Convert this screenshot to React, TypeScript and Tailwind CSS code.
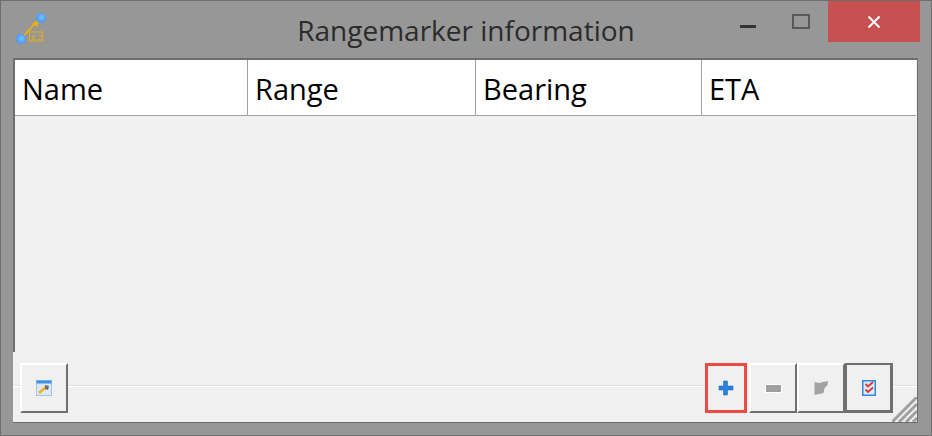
import React from "react";

const Btn = ({ children, cls }: { children: React.ReactNode; cls: string }) => (
  <div className={"relative z-10 flex items-center justify-center bg-[#f0f0f0] " + cls}>{children}</div>
);

const raised = "border-t-2 border-l-2 border-t-white border-l-white border-r-2 border-b-2 border-r-[#6f6f6f] border-b-[#6f6f6f]";

export default function App() {
  return (
    <div className="relative flex h-[436px] w-[932px] flex-col overflow-hidden border border-[#6e6e6e] bg-[#979797] font-['Open_Sans',sans-serif]">
      {/* title bar */}
      <div className="grid h-[57px] shrink-0 grid-cols-[1fr_auto_1fr] items-start">
        <svg className="ml-[13px] mt-[10px]" width="36" height="36" viewBox="0 0 36 36">
          <defs>
            <radialGradient id="b" cx="0.55" cy="0.45" r="0.6">
              <stop offset="0" stopColor="#7cc0ff" />
              <stop offset="1" stopColor="#3f93f2" />
            </radialGradient>
          </defs>
          <path d="M7 28 L23 10" stroke="#f0b400" strokeWidth="1.6" />
          <path d="M18.5 12.5 L25 9 L23.5 16 Z" fill="#f0b400" />
          <circle cx="7" cy="28" r="5" fill="url(#b)" />
          <circle cx="27" cy="7" r="5" fill="url(#b)" />
          <rect x="15.5" y="21" width="13" height="9" fill="none" stroke="#e6ae14" strokeWidth="1" />
          <text x="17" y="29" fontSize="8" fill="#e6ae14" fontFamily="Liberation Sans">6.2</text>
        </svg>
        <div className="pt-[10px] text-center text-[28px] leading-[38px] text-[#2b2b2b]">Rangemarker information</div>
        <div className="flex items-start justify-end pr-[11px]">
          <div className="mr-[36px] mt-[24px] h-[3px] w-[16px] bg-[#333333]" />
          <div className="mr-[18px] mt-[13px] h-[15px] w-[18px] border-[2px] border-[#595959]" />
          <div className="flex h-[41px] w-[92px] items-center justify-center bg-[#c75050]">
            <svg width="14" height="14" viewBox="0 0 14 14">
              <path d="M1.5 1.5 L12.5 12.5 M12.5 1.5 L1.5 12.5" stroke="#fff" strokeWidth="2" />
            </svg>
          </div>
        </div>
      </div>

      {/* client */}
      <div className="relative mx-[12px] flex h-[365px] w-[905px] flex-col border-t-[2px] border-l-[2px] border-r border-b border-[#6e6e6e] bg-[#f0f0f0]">
        <div className="flex h-[56px] w-[901px] shrink-0 border-b border-[#a0a0a0] bg-white text-[29px] leading-[58px] text-black">
          <div className="w-[233px] border-r border-[#a0a0a0] pl-[7px]">Name</div>
          <div className="w-[228px] border-r border-[#a0a0a0] pl-[7px]">Range</div>
          <div className="w-[226px] border-r border-[#a0a0a0] pl-[7px]">Bearing</div>
          <div className="flex-1 pl-[7px]">ETA</div>
        </div>
        <div className="flex-1" />

        {/* tool strip */}
        <div className="relative -ml-[2px] flex h-[70px] items-start justify-between bg-[#f0f0f0] pl-[7px] pr-[24px] pt-[11px]">
          <div className="absolute inset-x-0 top-[34px] h-px bg-white shadow-[0_-1px_0_#e2e2e2]" />
          <Btn cls={"h-[50px] w-[48px] " + raised}>
            <svg width="16" height="16" viewBox="0 0 16 16">
              <rect x="0.5" y="0.5" width="15" height="15" fill="#dfe8f2" stroke="#9cc4ee" />
              <rect x="0.5" y="0.5" width="15" height="3" fill="#3b94e6" />
              <path d="M3 13 L10 7" stroke="#e8b520" strokeWidth="2.6" />
              <path d="M9 5 L13 6 L12 10 L9 9 Z" fill="#6b6b6b" />
            </svg>
          </Btn>
          <div className="flex items-start">
            <Btn cls="mr-[2px] h-[50px] w-[42px] border-[3px] border-[#ec4a45]">
              <svg className="-ml-[1px]" width="16" height="16" viewBox="0 0 16 16">
                <path d="M5.5 1 H9.5 V6 H15 V10 H9.5 V15 H5.5 V10 H1 V6 H5.5 Z" fill="#2f7fdc" stroke="#0f5fc0" strokeWidth="0.5" />
              </svg>
            </Btn>
            <Btn cls={"h-[50px] w-[48px] " + raised}>
              <div className="box-content h-[7px] w-[15px] border border-white bg-[#a0a0a0]" />
            </Btn>
            <Btn cls={"h-[50px] w-[48px] " + raised}>
              <svg width="16" height="16" viewBox="0 0 16 16">
                <path d="M1.5 2 L6 3 L10 2 L15 1 L14.5 5 L11.5 8 L10.5 13 L6 14 L1.5 15 Z" fill="#a2a2a2" />
              </svg>
            </Btn>
            <Btn cls="h-[50px] w-[48px] border-[2px] border-b-[3px] border-r-[3px] border-[#6f6f6f]">
              <svg width="14" height="16" viewBox="0 0 14 16">
                <rect x="0.75" y="0.75" width="12.5" height="14.5" fill="#dfe9f5" stroke="#2f86dc" strokeWidth="1.5" />
                <path d="M3.5 4 L6 6.5 L11 2 M3.5 9.5 L6 12 L11 7.5" fill="none" stroke="#d43a30" strokeWidth="1.8" />
              </svg>
            </Btn>
          </div>
          <svg className="absolute bottom-0 right-0" width="25" height="25" viewBox="0 0 25 25">
            <path d="M0 25 L25 0 M7 25 L25 7 M14 25 L25 14 M21 25 L25 21" stroke="#a0a0a0" strokeWidth="3" />
          </svg>
        </div>
      </div>
    </div>
  );
}
